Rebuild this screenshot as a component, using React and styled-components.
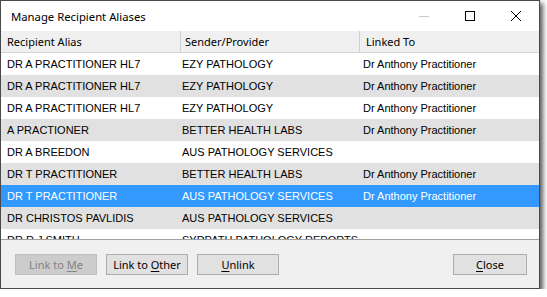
import styled, { createGlobalStyle } from "styled-components";

const GlobalStyle = createGlobalStyle`
  html, body {
    margin: 0;
    padding: 0;
    background: #ffffff;
  }
  * { box-sizing: border-box; }
`;

const rows = [
  { alias: "DR A PRACTITIONER HL7", sender: "EZY PATHOLOGY", linked: "Dr Anthony Practitioner" },
  { alias: "DR A PRACTITIONER HL7", sender: "EZY PATHOLOGY", linked: "Dr Anthony Practitioner" },
  { alias: "DR A PRACTITIONER HL7", sender: "EZY PATHOLOGY", linked: "Dr Anthony Practitioner" },
  { alias: "A PRACTIONER", sender: "BETTER HEALTH LABS", linked: "Dr Anthony Practitioner" },
  { alias: "DR A BREEDON", sender: "AUS PATHOLOGY SERVICES", linked: "" },
  { alias: "DR T PRACTITIONER", sender: "BETTER HEALTH LABS", linked: "Dr Anthony Practitioner" },
  { alias: "DR T PRACTITIONER", sender: "AUS PATHOLOGY SERVICES", linked: "Dr Anthony Practitioner", selected: true },
  { alias: "DR CHRISTOS PAVLIDIS", sender: "AUS PATHOLOGY SERVICES", linked: "" },
  { alias: "DR R J SMITH", sender: "SYDPATH PATHOLOGY REPORTS", linked: "" },
];

const Window = styled.div`
  width: 540px;
  height: 289px;
  border: 1px solid #4a4a4a;
  background: #f0f0f0;
  display: flex;
  flex-direction: column;
  box-shadow: 3px 3px 5px rgba(0, 0, 0, 0.65);
`;

const TitleBar = styled.div`
  height: 30px;
  background: #ffffff;
  display: flex;
  align-items: center;
  padding-left: 10px;
`;

const Title = styled.div`
  flex: 1;
  font-family: "Segoe UI", "Noto Sans", sans-serif;
  font-size: 11.3px;
  color: #000;
`;

const CaptionButton = styled.div`
  width: 46px;
  height: 30px;
  display: flex;
  align-items: center;
  justify-content: center;
`;

const ListView = styled.div`
  height: 209px;
  background: #ffffff;
  border-bottom: 1px solid #a0a0a0;
  overflow: hidden;
  display: flex;
  flex-direction: column;
`;

const HeaderRow = styled.div`
  height: 22px;
  flex: none;
  display: grid;
  grid-template-columns: 179px 179px 1fr;
  background: #f0f0f0;
  border-bottom: 1px solid #d5d5d5;
`;

const HeaderCell = styled.div`
  font-family: "Segoe UI", "Noto Sans", sans-serif;
  font-size: 11px;
  color: #000;
  display: flex;
  align-items: center;
  padding-left: ${(p) => p.$pad}px;
  border-left: ${(p) => (p.$sep ? "1px solid #d0d0d0" : "none")};
  height: 100%;
`;

const Row = styled.div`
  height: 22px;
  flex: none;
  display: grid;
  grid-template-columns: 179px 179px 1fr;
  background: ${(p) => (p.$selected ? "#3399ff" : p.$odd ? "#e1e1e1" : "#ffffff")};
  color: ${(p) => (p.$selected ? "#ffffff" : "#000000")};
`;

const Cell = styled.div`
  font-family: "Liberation Sans", Arial, sans-serif;
  font-size: 11px;
  display: flex;
  align-items: center;
  padding-left: ${(p) => p.$pad}px;
  white-space: nowrap;
  overflow: hidden;
`;

const Footer = styled.div`
  flex: 1;
  display: flex;
  align-items: flex-start;
  padding: 14px 12px 0 14px;
  gap: 9px;
`;

const Button = styled.button`
  width: ${(p) => p.$w}px;
  height: 21px;
  padding: 0;
  font-family: "Segoe UI", "Noto Sans", sans-serif;
  font-size: 11px;
  background: ${(p) => (p.disabled ? "#cccccc" : "#e1e1e1")};
  border: 1px solid ${(p) => (p.disabled ? "#bfbfbf" : "#adadad")};
  color: ${(p) => (p.disabled ? "#838383" : "#000000")};
  border-radius: 0;
  margin-left: ${(p) => (p.$push ? "auto" : "0")};
  u { text-decoration: underline; text-underline-offset: 2px; }
`;

export default function App() {
  return (
    <>
      <GlobalStyle />
      <Window>
        <TitleBar>
          <Title>Manage Recipient Aliases</Title>
          <CaptionButton>
            <svg width="10" height="10" viewBox="0 0 10 10">
              <line x1="0" y1="5.5" x2="10" y2="5.5" stroke="#c8c8c8" strokeWidth="1" />
            </svg>
          </CaptionButton>
          <CaptionButton>
            <svg width="10" height="10" viewBox="0 0 10 10">
              <rect x="0.5" y="0.5" width="9" height="9" fill="none" stroke="#000" strokeWidth="1" />
            </svg>
          </CaptionButton>
          <CaptionButton>
            <svg width="10" height="10" viewBox="0 0 10 10">
              <path d="M0 0 L10 10 M10 0 L0 10" stroke="#000" strokeWidth="1" />
            </svg>
          </CaptionButton>
        </TitleBar>
        <ListView>
          <HeaderRow>
            <HeaderCell $pad={6}>Recipient Alias</HeaderCell>
            <HeaderCell $pad={4} $sep>Sender/Provider</HeaderCell>
            <HeaderCell $pad={6} $sep>Linked To</HeaderCell>
          </HeaderRow>
          {rows.map((r, i) => (
            <Row key={i} $odd={i % 2 === 1} $selected={r.selected}>
              <Cell $pad={6}>{r.alias}</Cell>
              <Cell $pad={2}>{r.sender}</Cell>
              <Cell $pad={4}>{r.linked}</Cell>
            </Row>
          ))}
        </ListView>
        <Footer>
          <Button $w={82} disabled>Link to <u>M</u>e</Button>
          <Button $w={82}>Link to <u>O</u>ther</Button>
          <Button $w={82}><u>U</u>nlink</Button>
          <Button $w={74} $push><u>C</u>lose</Button>
        </Footer>
      </Window>
    </>
  );
}
